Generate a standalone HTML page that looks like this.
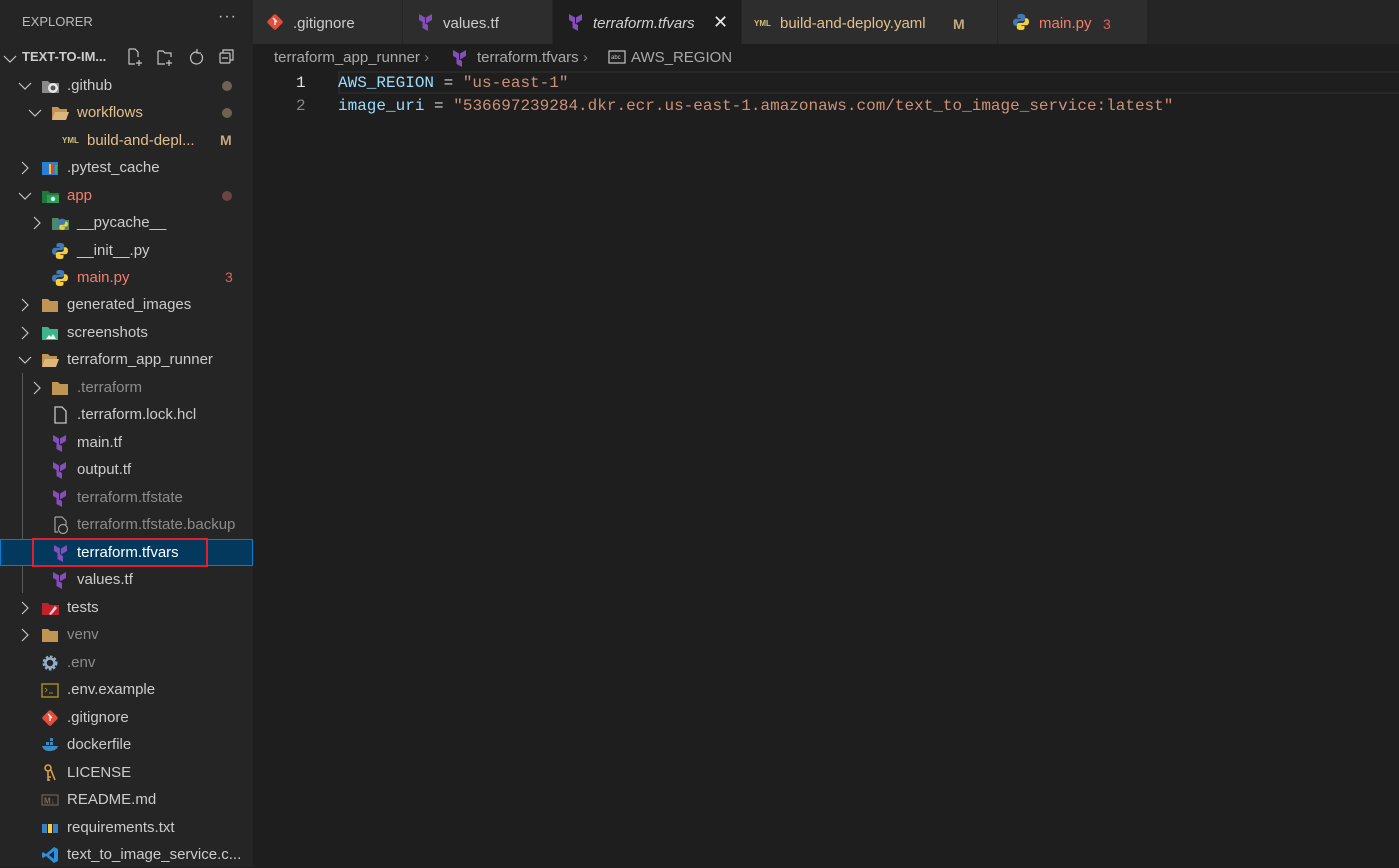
<!DOCTYPE html>
<html><head><meta charset="utf-8"><style>
*{margin:0;padding:0;box-sizing:border-box}
body{width:1399px;height:867px;background:#1e1e1e;overflow:hidden;position:relative;font-family:"Liberation Sans",sans-serif;color:#cccccc}
#side{position:absolute;left:0;top:0;width:253px;height:867px;background:#252526}
.row{position:absolute;left:0;width:253px;height:27px;font-size:15px;line-height:27px;white-space:nowrap}
.row .t{position:absolute;top:0}
.row svg{position:absolute;top:5px}
.row svg.cv{top:7px}
.dot{position:absolute;left:222px;top:9px;width:10px;height:10px;border-radius:50%}
.badge{position:absolute;left:220px;top:0;font-weight:bold;font-size:14px}
#tabs{position:absolute;left:253px;top:0;width:1146px;height:44px;background:#252526}
.tab{position:absolute;top:0;height:44px;background:#2d2d2d;font-size:15px;line-height:44px;border-right:1px solid #252526}
.tab svg{position:absolute;top:13px}
.tab .t{position:absolute;top:2px}
.code{position:absolute;font-family:"Liberation Mono",monospace;font-size:16px;white-space:pre}
</style></head><body>
<svg width="0" height="0" style="position:absolute"><defs>
<g id="tf"><polygon points="2,1 8,4.5 8,10.5 2,7" fill="#844fba"/><polygon points="9,4.5 15,1 15,7 9,10.5" fill="#844fba"/><polygon points="5.5,9 11,12 11,18 5.5,15" fill="#844fba"/></g>
<g id="py"><path d="M8.5 1c-3 0-3 1.3-3 2.5V5h3.2v.7H4C2.3 5.7 1 7 1 9.3s1.2 3.5 2.8 3.5H5v-2c0-1.5 1.3-2.7 2.8-2.7H11c1.2 0 2.2-1 2.2-2.2V3.5C13.2 2 12 1 8.5 1z" fill="#3e7ab8"/><path d="M9.5 17c3 0 3-1.3 3-2.5V13H9.3v-.7H14c1.7 0 3-1.3 3-3.6s-1.2-3.5-2.8-3.5H13v2c0 1.5-1.3 2.7-2.8 2.7H7c-1.2 0-2.2 1-2.2 2.2v2.4C4.8 16 6 17 9.5 17z" fill="#f5cf3d"/></g>
<g id="fold"><path d="M1 3h6l2 2h8v11H1z" fill="#c09553"/></g>
<g id="foldo"><path d="M1 3h6l2 2h7v3H5L1 16z" fill="#c09553"/><path d="M4 8h14l-3 8H1z" fill="#dcb67a"/></g>
<g id="git"><rect x="3" y="3" width="12" height="12" rx="2" transform="rotate(45 9 9)" fill="#e44d3a"/><path d="M7 5l4 4M9 7v5" stroke="#fff" stroke-width="1.3"/></g>
<path id="cd" d="M1 4l6 6 6-6" fill="none" stroke="#c5c5c5" stroke-width="1.2"/>
<path id="cr" d="M4 1l6 6-6 6" fill="none" stroke="#c5c5c5" stroke-width="1.2"/>
</defs></svg>

<div id="side">
<div style="position:absolute;left:22px;top:14px;font-size:13px;color:#bbbbbb">EXPLORER</div>
<div style="position:absolute;left:218px;top:8px;font-size:16px;color:#c5c5c5;letter-spacing:1px">···</div>
<svg style="position:absolute;left:3px;top:52px" width="14" height="14"><use href="#cd"/></svg>
<div style="position:absolute;left:22px;top:49px;font-size:13px;font-weight:bold;color:#cccccc">TEXT-TO-IM...</div>
<svg style="position:absolute;left:127px;top:47px" width="112" height="20" fill="none" stroke="#c5c5c5" stroke-width="1.2">
<path d="M2 2h6l3 3v5M2 2v15h6M12 13v6M9 16h6"/>
<path d="M31 4h5l2 2h6v4M31 4v13h7M42 13v6M39 16h6"/>
<path d="M70 5a6 6 0 1 0 4 2M70 2v4h4"/>
<rect x="93" y="6" width="10" height="10" rx="1"/><path d="M96 6V3h10v10h-3M95 11h6"/>
</svg>

<div class="row" style="top:72px"><svg class="cv" style="left:18px" width="14" height="14"><use href="#cd"/></svg><svg style="left:41px" width="20" height="18"><path d="M1 4h6l2 2h9v10H1z" fill="#8a8a8a"/><circle cx="12" cy="11" r="5" fill="#e8e8e8"/><circle cx="12" cy="11" r="2.5" fill="#555"/></svg><span class="t" style="left:67px;color:#cccccc">.github</span><span class="dot" style="background:#6e6353"></span></div>
<div class="row" style="top:99px"><svg class="cv" style="left:28px" width="14" height="14"><use href="#cd"/></svg><svg style="left:51px" width="20" height="18"><use href="#foldo"/></svg><span class="t" style="left:77px;color:#e2c08d">workflows</span><span class="dot" style="background:#6e6353"></span></div>
<div class="row" style="top:127px"><span style="position:absolute;left:62px;top:0;font-size:8px;color:#d0c080;font-weight:bold">YML</span><span class="t" style="left:87px;color:#e2c08d">build-and-depl...</span><span class="badge" style="color:#c2a97e">M</span></div>
<div class="row" style="top:154px"><svg class="cv" style="left:18px" width="14" height="14"><use href="#cr"/></svg><svg style="left:41px" width="20" height="18"><rect x="1" y="3" width="16" height="13" fill="#2a7fd0"/><rect x="8" y="5" width="2" height="10" fill="#f3c322"/><rect x="11" y="4" width="2" height="11" fill="#e04040"/><rect x="14" y="6" width="2" height="9" fill="#3fb04f"/></svg><span class="t" style="left:67px">.pytest_cache</span></div>
<div class="row" style="top:182px"><svg class="cv" style="left:18px" width="14" height="14"><use href="#cd"/></svg><svg style="left:41px" width="20" height="18"><path d="M1 4h6l2 2h9v10H1z" fill="#1e7a3e"/><rect x="6" y="8" width="12" height="8" fill="#2e9e55"/><circle cx="12" cy="12" r="2.2" fill="#cfe"/></svg><span class="t" style="left:67px;color:#f27e6e">app</span><span class="dot" style="background:#6b4544"></span></div>
<div class="row" style="top:209px"><svg class="cv" style="left:30px" width="14" height="14"><use href="#cr"/></svg><svg style="left:51px" width="20" height="18"><path d="M1 4h6l2 2h9v10H1z" fill="#4a8a6a"/><g transform="translate(5,4) scale(.7)"><use href="#py"/></g></svg><span class="t" style="left:77px">__pycache__</span></div>
<div class="row" style="top:237px"><svg style="left:51px" width="20" height="18"><use href="#py"/></svg><span class="t" style="left:77px">__init__.py</span></div>
<div class="row" style="top:264px"><svg style="left:51px" width="20" height="18"><use href="#py"/></svg><span class="t" style="left:77px;color:#f27e6e">main.py</span><span class="badge" style="left:225px;color:#d9655a;font-weight:normal">3</span></div>
<div class="row" style="top:291px"><svg class="cv" style="left:18px" width="14" height="14"><use href="#cr"/></svg><svg style="left:41px" width="20" height="18"><use href="#fold"/></svg><span class="t" style="left:67px">generated_images</span></div>
<div class="row" style="top:319px"><svg class="cv" style="left:18px" width="14" height="14"><use href="#cr"/></svg><svg style="left:41px" width="20" height="18"><path d="M1 3h6l2 2h8v11H1z" fill="#3bb589"/><path d="M5 15l3-4 2 2 2-3 3 5z" fill="#e8fff4"/></svg><span class="t" style="left:67px">screenshots</span></div>
<div class="row" style="top:346px"><svg class="cv" style="left:18px" width="14" height="14"><use href="#cd"/></svg><svg style="left:41px" width="20" height="18"><use href="#foldo"/></svg><span class="t" style="left:67px">terraform_app_runner</span></div>
<div style="position:absolute;left:22px;top:373px;width:1px;height:220px;background:#585858"></div>
<div class="row" style="top:374px"><svg class="cv" style="left:30px" width="14" height="14"><use href="#cr"/></svg><svg style="left:51px" width="20" height="18"><use href="#fold"/></svg><span class="t" style="left:77px;color:#8c8c8c">.terraform</span></div>
<div class="row" style="top:401px"><svg style="left:51px" width="20" height="18"><path d="M4 1h7l4 4v12H4z" fill="none" stroke="#c5c5c5" stroke-width="1.3"/></svg><span class="t" style="left:77px">.terraform.lock.hcl</span></div>
<div class="row" style="top:429px"><svg style="left:51px" width="20" height="19"><use href="#tf"/></svg><span class="t" style="left:77px">main.tf</span></div>
<div class="row" style="top:456px"><svg style="left:51px" width="20" height="19"><use href="#tf"/></svg><span class="t" style="left:77px">output.tf</span></div>
<div class="row" style="top:484px"><svg style="left:51px" width="20" height="19"><use href="#tf"/></svg><span class="t" style="left:77px;color:#8c8c8c">terraform.tfstate</span></div>
<div class="row" style="top:511px"><svg style="left:51px" width="20" height="18"><path d="M4 1h7l4 4v4M4 1v15h3" fill="none" stroke="#a0a0a0" stroke-width="1.2"/><circle cx="12" cy="13" r="4.5" fill="none" stroke="#a0a0a0" stroke-width="1.2"/></svg><span class="t" style="left:77px;color:#8c8c8c">terraform.tfstate.backup</span></div>
<div class="row" style="top:539px;background:#04395e;border:1px solid #007fd4;height:27px"><svg style="left:51px;top:4px" width="20" height="19"><use href="#tf"/></svg><span class="t" style="left:76px;top:-1px;color:#ffffff">terraform.tfvars</span><div style="position:absolute;left:31px;top:-2px;width:176px;height:29px;border:2px solid #e0202a"></div></div>
<div class="row" style="top:566px"><svg style="left:51px" width="20" height="19"><use href="#tf"/></svg><span class="t" style="left:77px">values.tf</span></div>
<div class="row" style="top:594px"><svg class="cv" style="left:18px" width="14" height="14"><use href="#cr"/></svg><svg style="left:41px" width="20" height="18"><path d="M1 4h6l2 2h9v10H1z" fill="#c0222a"/><path d="M8 15l6-8 2 2-6 7z" fill="#f8c8cc"/></svg><span class="t" style="left:67px">tests</span></div>
<div class="row" style="top:621px"><svg class="cv" style="left:18px" width="14" height="14"><use href="#cr"/></svg><svg style="left:41px" width="20" height="18"><use href="#fold"/></svg><span class="t" style="left:67px;color:#8c8c8c">venv</span></div>
<div class="row" style="top:649px"><svg style="left:41px" width="20" height="18"><circle cx="9" cy="9" r="6" fill="none" stroke="#8fb0c8" stroke-width="3" stroke-dasharray="2.4 1.6"/><circle cx="9" cy="9" r="4.5" fill="none" stroke="#8fb0c8" stroke-width="2.5"/></svg><span class="t" style="left:67px;color:#8c8c8c">.env</span></div>
<div class="row" style="top:676px"><svg style="left:41px" width="20" height="18"><rect x="1" y="3" width="16" height="13" fill="none" stroke="#a08a20" stroke-width="1.5"/><path d="M4 7l2 2-2 2M8 12h4" stroke="#a08a20" stroke-width="1"/></svg><span class="t" style="left:67px">.env.example</span></div>
<div class="row" style="top:704px"><svg style="left:41px" width="20" height="18"><use href="#git"/></svg><span class="t" style="left:67px">.gitignore</span></div>
<div class="row" style="top:731px"><svg style="left:41px" width="20" height="18"><path d="M1 10h16c-1 4-5 5-9 5-4 0-6-2-7-5z" fill="#3a8cc0"/><rect x="5" y="6" width="3" height="3" fill="#3a8cc0"/><rect x="9" y="6" width="3" height="3" fill="#3a8cc0"/><rect x="9" y="2" width="3" height="3" fill="#3a8cc0"/></svg><span class="t" style="left:67px">dockerfile</span></div>
<div class="row" style="top:759px"><svg style="left:41px" width="20" height="18"><circle cx="7" cy="4" r="3" fill="none" stroke="#d9a040" stroke-width="1.6"/><path d="M7 7v10M7 13h3M7 16h2M10 6l4 10" stroke="#d9a040" stroke-width="1.6"/></svg><span class="t" style="left:67px">LICENSE</span></div>
<div class="row" style="top:786px"><svg style="left:41px" width="20" height="18"><rect x="1" y="4" width="16" height="10" fill="none" stroke="#6a5a4a" stroke-width="1.3"/><text x="3" y="12.5" font-size="8" fill="#7a6a5a" font-family="Liberation Sans" font-weight="bold">M↓</text></svg><span class="t" style="left:67px">README.md</span></div>
<div class="row" style="top:814px"><svg style="left:41px" width="20" height="18"><rect x="1" y="5" width="5" height="9" fill="#3a80c0"/><rect x="7" y="5" width="4" height="9" fill="#f5cf3d"/><rect x="12" y="5" width="5" height="9" fill="#3a80c0"/></svg><span class="t" style="left:67px">requirements.txt</span></div>
<div class="row" style="top:841px"><svg style="left:41px" width="20" height="18"><path d="M13 1l4 2v12l-4 2-8-7-3 2-1-1V7l1-1 3 2z M13 5l-5 4 5 4z" fill="#2b8fe0" fill-rule="evenodd"/></svg><span class="t" style="left:67px">text_to_image_service.c...</span></div>
</div>

<div id="tabs">
<div class="tab" style="left:0;width:150px"><svg style="left:13px" width="20" height="18"><use href="#git"/></svg><span class="t" style="left:40px">.gitignore</span></div>
<div class="tab" style="left:150px;width:150px"><svg style="left:14px" width="20" height="19"><use href="#tf"/></svg><span class="t" style="left:40px">values.tf</span></div>
<div class="tab" style="left:300px;width:189px;background:#1e1e1e"><svg style="left:14px" width="20" height="19"><use href="#tf"/></svg><span class="t" style="left:40px;font-style:italic;color:#d0d0d0">terraform.tfvars</span><span class="t" style="left:160px;top:0;font-size:18px;color:#e8e8e8">✕</span></div>
<div class="tab" style="left:489px;width:256px"><span style="position:absolute;left:12px;top:2px;font-size:8px;font-weight:bold;color:#d0c080">YML</span><span class="t" style="left:38px;color:#e2c08d">build-and-deploy.yaml</span><span class="t" style="left:211px;color:#c2a97e;font-weight:bold;font-size:14px">M</span></div>
<div class="tab" style="left:745px;width:150px"><svg style="left:14px" width="20" height="18"><use href="#py"/></svg><span class="t" style="left:41px;color:#f27e6e">main.py</span><span class="t" style="left:105px;color:#d9655a;font-size:14px">3</span></div>
</div>

<div style="position:absolute;left:274px;top:48px;font-size:15px;color:#a9a9a9;line-height:20px;white-space:nowrap">terraform_app_runner <span style="color:#888">&#8250;</span></div>
<svg style="position:absolute;left:451px;top:49px" width="20" height="19"><use href="#tf"/></svg>
<div style="position:absolute;left:477px;top:48px;font-size:15px;color:#a9a9a9;line-height:20px;white-space:nowrap">terraform.tfvars <span style="color:#888">&#8250;</span></div>
<svg style="position:absolute;left:608px;top:50px" width="18" height="14"><rect x="1" y="1" width="16" height="12" fill="none" stroke="#c5c5c5" stroke-width="1.2"/><text x="3" y="9" font-size="6" fill="#c5c5c5" font-family="Liberation Sans">abc</text></svg>
<div style="position:absolute;left:631px;top:48px;font-size:15px;color:#a9a9a9;line-height:20px">AWS_REGION</div>

<div style="position:absolute;left:338px;top:71px;width:1061px;height:23px;border:2px solid #282828;border-right:none"></div>
<div class="code" style="left:296px;top:72px;line-height:22px;color:#e0e0e0">1</div>
<div class="code" style="left:296px;top:95px;line-height:22px;color:#858585">2</div>
<div class="code" style="left:338px;top:72px;line-height:22px"><span style="color:#9cdcfe">AWS_REGION</span><span style="color:#d4d4d4"> = </span><span style="color:#ce9178">"us-east-1"</span></div>
<div class="code" style="left:338px;top:95px;line-height:22px"><span style="color:#9cdcfe">image_uri</span><span style="color:#d4d4d4"> = </span><span style="color:#ce9178">"536697239284.dkr.ecr.us-east-1.amazonaws.com/text_to_image_service:latest"</span></div>
</body></html>
